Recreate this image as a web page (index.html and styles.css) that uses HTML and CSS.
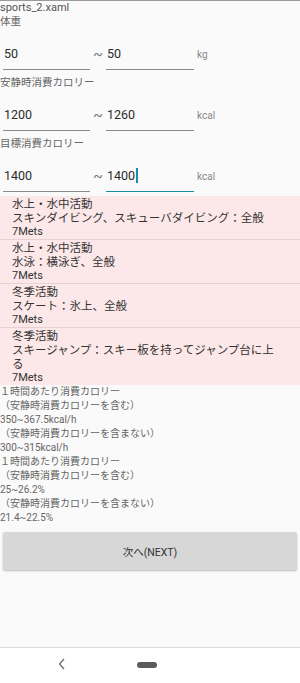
FILE: index.html
```html
<!DOCTYPE html>
<html lang="ja">
<head>
<meta charset="UTF-8">
<meta name="viewport" content="width=device-width, initial-scale=1.0">
<title>sports_2</title>
<link rel="stylesheet" href="styles.css">
</head>
<body>
<div class="screen">
  <div class="main">
    <div class="file-name">sports_2.xaml</div>

    <div class="label">体重</div>
    <div class="range-row">
      <div class="field">50</div>
      <span class="tilde">~</span>
      <div class="field">50</div>
      <span class="unit">kg</span>
    </div>

    <div class="label">安静時消費カロリー</div>
    <div class="range-row">
      <div class="field">1200</div>
      <span class="tilde">~</span>
      <div class="field">1260</div>
      <span class="unit">kcal</span>
    </div>

    <div class="label">目標消費カロリー</div>
    <div class="range-row">
      <div class="field">1400</div>
      <span class="tilde">~</span>
      <div class="field focused">1400<span class="caret"></span></div>
      <span class="unit">kcal</span>
    </div>

    <div class="activity-list">
      <div class="activity">
        <div>水上・水中活動</div>
        <div>スキンダイビング、スキューバダイビング：全般</div>
        <div class="mets">7Mets</div>
      </div>
      <div class="activity">
        <div>水上・水中活動</div>
        <div>水泳：横泳ぎ、全般</div>
        <div class="mets">7Mets</div>
      </div>
      <div class="activity">
        <div>冬季活動</div>
        <div>スケート：氷上、全般</div>
        <div class="mets">7Mets</div>
      </div>
      <div class="activity">
        <div>冬季活動</div>
        <div>スキージャンプ：スキー板を持ってジャンプ台に上る</div>
        <div class="mets">7Mets</div>
      </div>
    </div>

    <div class="result">
      <div>１時間あたり消費カロリー</div>
      <div>（安静時消費カロリーを含む）</div>
      <div>350~367.5kcal/h</div>
      <div>（安静時消費カロリーを含まない）</div>
      <div>300~315kcal/h</div>
      <div>１時間あたり消費カロリー</div>
      <div>（安静時消費カロリーを含む）</div>
      <div>25~26.2%</div>
      <div>（安静時消費カロリーを含まない）</div>
      <div>21.4~22.5%</div>
    </div>

    <button class="next-btn">次へ(NEXT)</button>
  </div>

  <div class="nav-bar">
    <svg class="nav-back" width="8" height="12" viewBox="0 0 8 12">
      <path d="M6 1 L1.5 6 L6 11" fill="none" stroke="#666" stroke-width="1.2"/>
    </svg>
    <div class="nav-home"></div>
  </div>
</div>
</body>
</html>
```

FILE: styles.css
```css
body, html {
  margin: 0;
  height: 100%;
}

body {
  font-family: Roboto, "Noto Sans CJK JP", sans-serif;
  background: #fafafa;
  color: #333;
}

.screen {
  height: 683px;
  display: flex;
  flex-direction: column;
  border-top: 1px solid #9a9a9a;
  box-sizing: border-box;
}

.main {
  flex: 1;
}

.file-name {
  font-size: 11px;
  line-height: 14px;
  color: #555;
}

.label {
  font-size: 10.5px;
  line-height: 14px;
  color: #666;
}

.range-row {
  display: flex;
  align-items: center;
  height: 41px;
  margin-bottom: 6px;
}

.field {
  box-sizing: border-box;
  width: 87px;
  height: 41px;
  margin-left: 3px;
  padding: 8px 0 0 1px;
  display: flex;
  align-items: center;
  font-size: 12.5px;
  color: #2c2c2c;
  border-bottom: 1px solid #8a8a8a;
}

.range-row .field + .tilde + .field {
  margin-left: 0;
  width: 88px;
}

.field.focused {
  border-bottom: 1.5px solid #1e88a8;
}

.tilde {
  width: 16px;
  padding-top: 8px;
  text-align: center;
  font-size: 14px;
  color: #777;
}

.unit {
  margin-left: 3px;
  padding-top: 10px;
  font-size: 10px;
  color: #888;
}

.caret {
  display: inline-block;
  width: 1.5px;
  height: 15px;
  margin-left: 1px;
  background: #1e88a8;
}

.activity-list {
  background: #fce8e8;
  margin-top: -2px;
}

.activity {
  padding: 1px 18px 0 12px;
  font-size: 11.5px;
  line-height: 14px;
  color: #333;
  border-bottom: 1px solid #e6d2d2;
}

.activity:last-child {
  border-bottom: none;
}

.activity .mets {
  font-size: 11px;
}

.result {
  font-size: 10px;
  line-height: 14px;
  color: #666;
}

.next-btn {
  display: block;
  width: 294px;
  height: 38px;
  margin: 7px 3px 0;
  border: none;
  border-radius: 2px;
  background: #d7d7d7;
  box-shadow: 0 1px 2px rgba(0, 0, 0, 0.25);
  font-family: Roboto, "Noto Sans CJK JP", sans-serif;
  font-size: 10.5px;
  color: #333;
}

.nav-bar {
  height: 35px;
  background: #fff;
  border-top: 1px solid #dcdcdc;
  position: relative;
}

.nav-back {
  position: absolute;
  left: 58px;
  top: 10px;
}

.nav-home {
  position: absolute;
  left: 137px;
  top: 14px;
  width: 20px;
  height: 6px;
  border-radius: 3px;
  background: #5a5a5a;
}
```
